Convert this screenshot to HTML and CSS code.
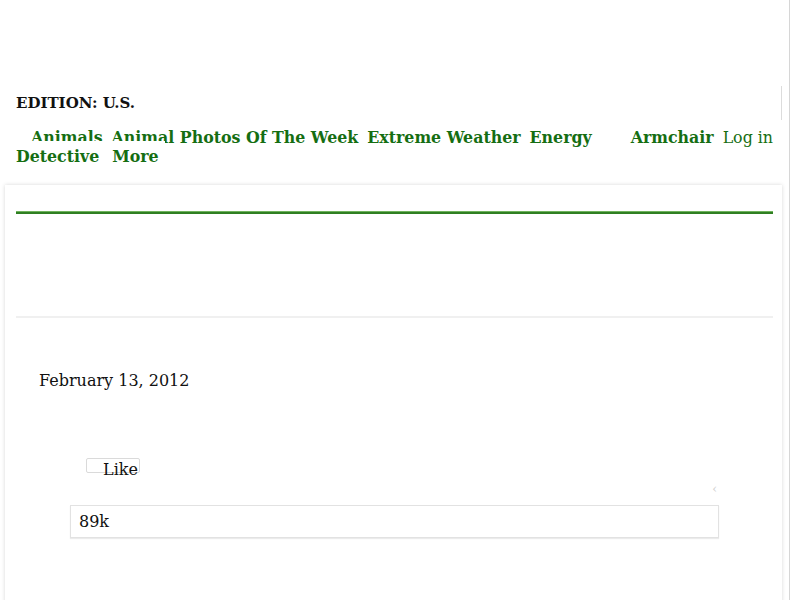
FILE: index.html
```html
<!DOCTYPE html>
<html>
<head>
<meta charset="utf-8">
<link rel="stylesheet" href="styles.css">
</head>
<body>
<div class="page">
  <header class="masthead">
    <div class="divider"></div>
    <div class="edition">EDITION: U.S.</div>
    <nav class="nav">
      <a class="login" href="#">Log in</a>
      <a class="item first" href="#">Animals</a><a class="item" href="#">Animal Photos Of The Week</a><a class="item" href="#">Extreme Weather</a><a class="item" href="#">Energy</a><a class="item wide" href="#">Armchair Detective</a><a class="item more" href="#">More</a>
    </nav>
  </header>
  <main class="card">
    <div class="rule"></div>
    <div class="banner"></div>
    <div class="date">February 13, 2012</div>
    <div class="social">
      <div class="like"><span class="like-text">Like</span></div>
      <div class="chev">&lsaquo;</div>
      <div class="count">89k</div>
    </div>
  </main>
</div>
</body>
</html>
```

FILE: styles.css
```css
html, body {
  margin: 0;
  padding: 0;
  background: #fff;
}
body {
  font-family: "DejaVu Serif", serif;
  color: #111;
}
.page {
  width: 789px;
  min-height: 600px;
  border-right: 1px solid #d6d6d6;
  box-sizing: content-box;
}
.masthead {
  position: relative;
  padding: 94px 16px 0 16px;
  height: 91px;
  box-sizing: content-box;
}
.divider {
  position: absolute;
  top: 86px;
  right: 7px;
  width: 1px;
  height: 34px;
  background: #dcdcdc;
}
.edition {
  font-weight: bold;
  font-size: 15px;
  line-height: 18px;
  color: #111;
}
.nav {
  margin-top: 16px;
  font-size: 15.8px;
  line-height: 19px;
  font-weight: bold;
  text-indent: 15px;
}
.nav a {
  color: #156e12;
  text-decoration: none;
}
.nav .item {
  position: relative;
  background: #fff;
  padding: 6px 6px;
  margin-right: -3px;
}
.nav .first {
  padding-left: 0;
}
.nav .wide {
  margin-left: 30px;
}
.nav .more {
  margin-left: 4px;
}
.login {
  float: right;
  font-weight: normal;
  text-indent: 0;
}
.card {
  margin: 0 7px 0 5px;
  padding: 26px 9px 40px 11px;
  min-height: 389px;
  box-shadow: 0 0 4px rgba(0, 0, 0, 0.16);
}
.rule {
  height: 0;
  border-top: 1px solid #6fb45c;
  border-bottom: 2px solid #2f7f22;
}
.banner {
  height: 102px;
  border-bottom: 2px solid #f0f0f0;
}
.date {
  padding: 53px 0 0 23px;
  font-size: 16px;
  line-height: 20px;
  color: #111;
}
.social {
  padding: 67px 54px 0 54px;
  display: flex;
  flex-direction: column;
}
.like {
  margin-left: 16px;
  width: 52px;
  height: 13px;
  border: 1px solid #dadada;
  border-radius: 2px;
  font-size: 16px;
  line-height: 20px;
  position: relative;
}
.like-text {
  position: absolute;
  left: 16px;
  top: 1px;
}
.chev {
  align-self: flex-end;
  margin-top: 9px;
  margin-right: 2px;
  font-size: 12px;
  line-height: 14px;
  color: #cfcfcf;
}
.count {
  margin-top: 9px;
  height: 31px;
  border: 1px solid #e2e2e2;
  box-shadow: 0 1px 1px rgba(0, 0, 0, 0.08);
  padding: 0 8px;
  font-size: 16px;
  line-height: 31px;
  color: #111;
}
```
